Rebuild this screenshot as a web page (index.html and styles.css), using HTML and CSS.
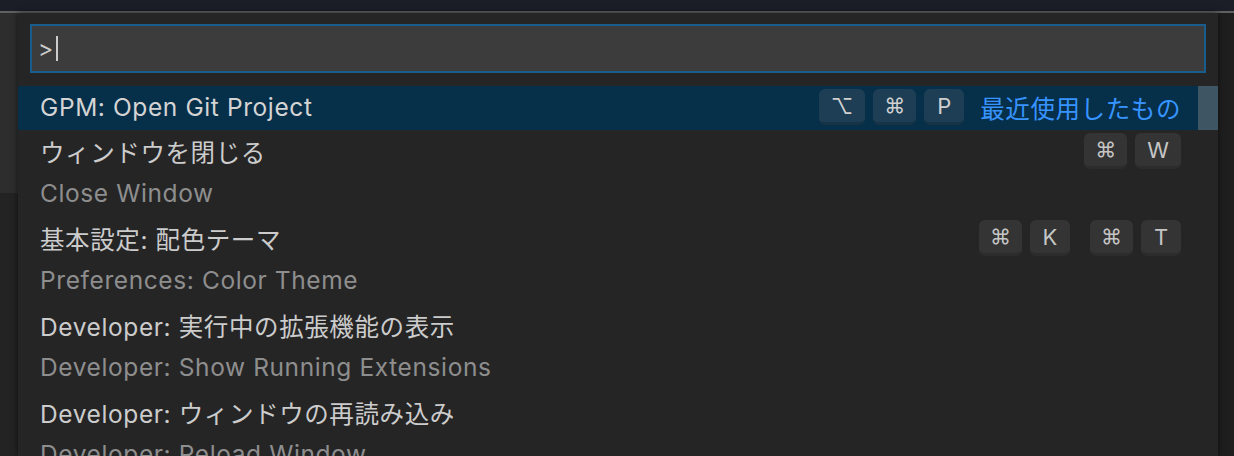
FILE: index.html
```html
<!DOCTYPE html>
<html lang="ja">
  <head>
    <meta charset="UTF-8" />
    <meta name="viewport" content="width=device-width, initial-scale=1.0" />
    <title>Command Palette</title>
    <link rel="stylesheet" href="styles.css">
  </head>
  <body>
    <div class="titlebar"></div>
    <div class="workbench">
      <div class="sidebar">
        <div class="tab"></div>
      </div>
      <div class="quick-open">
        <div class="input-box">
          <span class="prompt">&gt;</span><span class="caret"></span>
        </div>
        <div class="list">
          <div class="row selected">
            <div class="line">
              <span class="label">GPM: Open Git Project</span>
              <span class="keys">
                <span class="key">⌥</span>
                <span class="key cmd">⌘</span>
                <span class="key">P</span>
              </span>
              <span class="recent">最近使用したもの</span>
            </div>
            <div class="slider"></div>
          </div>
          <div class="row">
            <div class="line">
              <span class="label">ウィンドウを閉じる</span>
              <span class="keys">
                <span class="key cmd">⌘</span>
                <span class="key">W</span>
              </span>
            </div>
            <div class="detail">Close Window</div>
          </div>
          <div class="row">
            <div class="line">
              <span class="label">基本設定: 配色テーマ</span>
              <span class="keys">
                <span class="key cmd">⌘</span>
                <span class="key">K</span>
                <span class="chord-gap"></span>
                <span class="key cmd">⌘</span>
                <span class="key">T</span>
              </span>
            </div>
            <div class="detail">Preferences: Color Theme</div>
          </div>
          <div class="row">
            <div class="line">
              <span class="label">Developer: 実行中の拡張機能の表示</span>
            </div>
            <div class="detail">Developer: Show Running Extensions</div>
          </div>
          <div class="row">
            <div class="line">
              <span class="label">Developer: ウィンドウの再読み込み</span>
            </div>
            <div class="detail">Developer: Reload Window</div>
          </div>
        </div>
      </div>
      <div class="editor"></div>
    </div>
  </body>
</html>
```

FILE: styles.css
```css
body {
  margin: 0;
  height: 456px;
  overflow: hidden;
  background-color: #1e1e1e;
  font-family: Inter, "Noto Sans CJK JP", sans-serif;
  color: #cccccc;
}

.titlebar {
  height: 11px;
  background-color: #1b1d27;
  border-bottom: 2px solid #606060;
}

.workbench {
  display: flex;
  height: 443px;
}

.sidebar {
  width: 18px;
  background-color: #232323;
}

.tab {
  height: 180px;
  background-color: #2d2d2d;
}

.quick-open {
  width: 1200px;
  background-color: #252526;
  padding-top: 11px;
  box-shadow: 0 0 6px rgba(0, 0, 0, 0.6);
  position: relative;
  z-index: 1;
}

.editor {
  flex: 1;
  background-color: #1e1e1e;
}

.input-box {
  margin: 0 12px;
  height: 45px;
  background-color: #3c3c3c;
  border: 2px solid #195d8e;
  display: flex;
  align-items: center;
  padding-left: 6px;
  font-size: 23px;
}

.prompt {
  color: #cccccc;
}

.caret {
  width: 2px;
  height: 25px;
  margin-left: 3px;
  background-color: #cccccc;
}

.list {
  margin-top: 13px;
}

.row {
  position: relative;
  padding: 0 37px 3px 22px;
  letter-spacing: 0.6px;
}

.row.selected {
  background-color: #062f4a;
  padding-bottom: 2px;
}

.line {
  display: flex;
  align-items: center;
  height: 42px;
}

.label {
  flex: 1;
  font-size: 24.5px;
  white-space: nowrap;
}

.selected .label {
  color: #d4d4d4;
}

.detail {
  height: 42px;
  line-height: 42px;
  font-size: 24.5px;
  color: #8e8e8e;
  white-space: nowrap;
}

.keys {
  display: flex;
  gap: 8px;
  letter-spacing: 0;
}

.key {
  min-width: 16px;
  height: 33px;
  padding: 0 12px;
  display: flex;
  align-items: center;
  justify-content: center;
  font-size: 22px;
  color: #c5c5c5;
  background-color: #343434;
  border-radius: 6px;
  border-bottom: 3px solid #2c2c2c;
}

.key.cmd {
  padding: 0 11px;
  font-size: 21px;
}

.selected .key {
  background-color: #1d3e54;
  border-bottom-color: #173346;
  color: #d0d0d0;
}

.chord-gap {
  width: 4px;
}

.recent {
  margin-left: 16px;
  font-size: 24.5px;
  color: #3794ff;
}

.slider {
  position: absolute;
  top: 0;
  right: 0;
  width: 20px;
  height: 100%;
  background-color: #3e5564;
}
```
